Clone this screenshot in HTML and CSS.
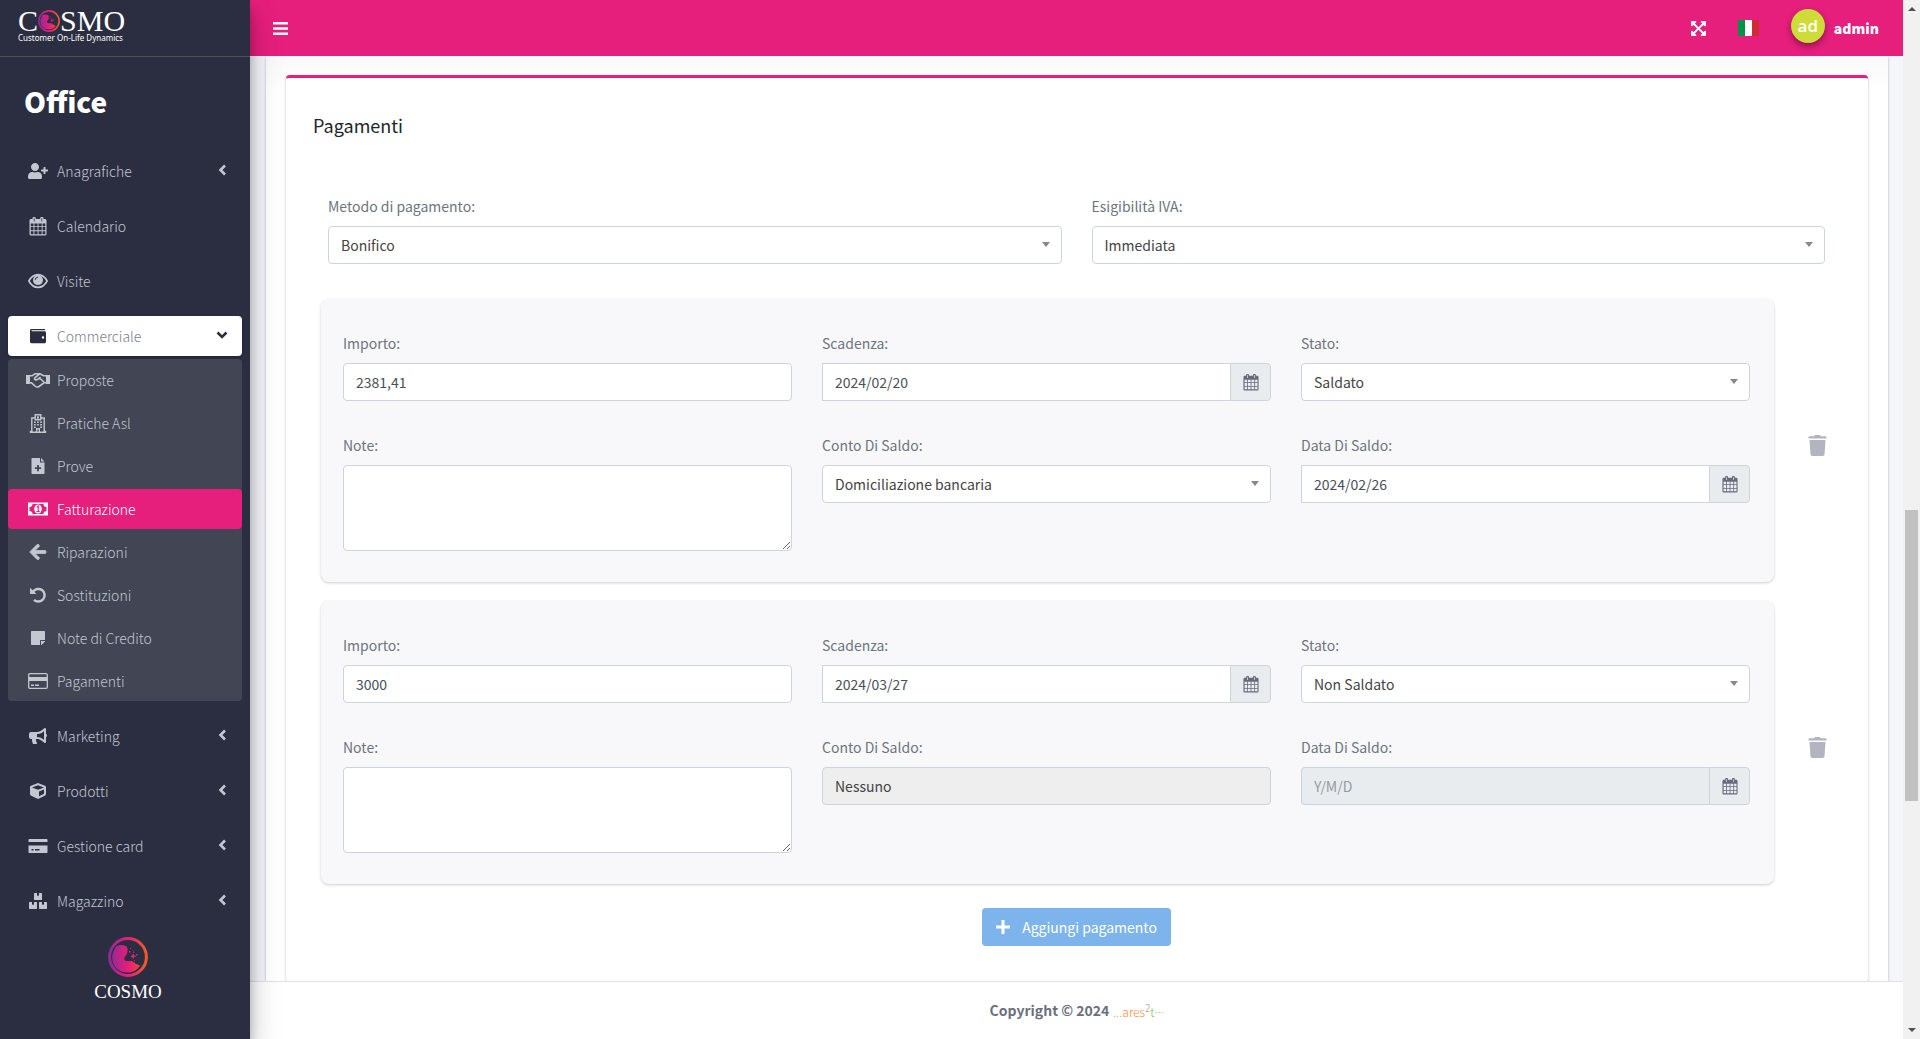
FILE: index.html
```
<!DOCTYPE html>
<html lang="it">
<head>
  <meta charset="UTF-8">
  <meta name="viewport" content="width=device-width, initial-scale=1.0">
  <title>COSMO - Fatturazione</title>
  <link rel="stylesheet" href="styles.css">
</head>
<body>
  <!-- Shared icons -->
  <svg class="sprite" aria-hidden="true">
    <defs>
      <linearGradient id="cosmo-grad" gradientUnits="userSpaceOnUse" x1="2" x2="38" y1="20" y2="20">
        <stop offset="0" stop-color="#8e2a94"/>
        <stop offset="0.5" stop-color="#e61e7c"/>
        <stop offset="1" stop-color="#f15a29"/>
      </linearGradient>
    </defs>
    <symbol id="i-cosmo" viewBox="0 0 40 40">
      <circle cx="20" cy="20" r="18.4" fill="none" stroke="url(#cosmo-grad)" stroke-width="3"/>
      <path fill="url(#cosmo-grad)" d="M9 9c3-1.500 6.500-1 9 .3 1.200.9 1.700 2.500 1.500 4.700-.2 2-.6 3-1.500 4.500-1.600 1.200-2.300 3-1.300 4.800 1.800 1.500 4.500.4 6.500.7 2.300.4 3.400 2 5 3l4 1.500c-3 4.500-7 7-12.500 7C11 35.500 4.200 29.500 4.200 21c0-4.500 1.800-9.500 4.800-12z"/>
      <path fill="#e61e7c" d="M23 18.500h1.500V17h1.500v1.500h1.500V20H26v1.500h-1.500V20H23zM21 14h1.500v1.500H21zM25 14.500h1.200v1.200H25zM28 17h1.500v1.500H28zM22 11h1v1h-1zM26 23h1v1h-1z"/>
    </symbol>
    <symbol id="i-calendar" viewBox="0 0 18 19">
      <path fill="currentColor" fill-rule="evenodd" d="M2 2h1.500V1.300C3.500.5 4.100 0 4.800 0h.7c.7 0 1.300.5 1.300 1.300V2h4.400v-.7c0-.8.6-1.300 1.300-1.300h.7c.7 0 1.300.5 1.300 1.300V2H16c.8 0 1.500.7 1.500 1.500V17c0 .8-.7 1.500-1.500 1.500H2c-.8 0-1.500-.7-1.500-1.500V3.500C.5 2.700 1.200 2 2 2zM4.800 1.300v3.200h.8V1.300zM12.400 1.300v3.200h.8V1.300zM1.800 6.500v2.700h2.700V6.500zM5.400 6.500v2.700h3.200V6.500zM9.500 6.500v2.700h3.200V6.500zM13.600 6.500v2.700h2.700V6.500zM1.800 10.100v3.200h2.700v-3.200zM5.400 10.100v3.200h3.200v-3.200zM9.500 10.100v3.200h3.200v-3.200zM13.600 10.100v3.200h2.700v-3.200zM1.800 14.200v3h2.700v-3zM5.400 14.200v3h3.200v-3zM9.500 14.200v3h3.200v-3zM13.600 14.200v3h2.700v-3z"/>
    </symbol>
    <symbol id="i-left" viewBox="0 0 8 12">
      <path d="M6.500 1.500L2 6l4.500 4.500" fill="none" stroke="currentColor" stroke-width="2.600"/>
    </symbol>
    <symbol id="i-trash" viewBox="0 0 18 21">
      <path fill="currentColor" d="M6.500 0h5l.8 1.200H17c.6 0 1 .3 1 .8v1.500H0V2c0-.5.400-.8 1-.8h4.700zM1 5h16l-1 14.200c-.1 1-.9 1.800-2 1.800H4c-1.100 0-1.900-.8-2-1.800z"/>
    </symbol>
  </svg>

  <div class="layout">
    <!-- Sidebar -->
    <aside class="sidebar">
      <a class="brand" href="#">
        <span class="brand-name">C<svg class="brand-globe"><use href="#i-cosmo"/></svg>SMO</span>
        <span class="brand-tagline">Customer On-Life Dynamics</span>
      </a>
      <h1 class="area-title">Office</h1>
      <nav class="menu">
        <a class="menu-link" href="#">
          <svg class="icon" viewBox="0 0 640 512"><path fill="currentColor" d="M624 208h-64v-64c0-8.800-7.200-16-16-16h-32c-8.800 0-16 7.200-16 16v64h-64c-8.800 0-16 7.200-16 16v32c0 8.800 7.200 16 16 16h64v64c0 8.800 7.200 16 16 16h32c8.800 0 16-7.200 16-16v-64h64c8.800 0 16-7.200 16-16v-32c0-8.800-7.200-16-16-16zm-400 48c70.700 0 128-57.300 128-128S294.700 0 224 0 96 57.300 96 128s57.300 128 128 128zm89.600 32h-16.700c-22.200 10.200-46.900 16-72.900 16s-50.600-5.800-72.900-16h-16.700C60.200 288 0 348.200 0 422.400V464c0 26.500 21.500 48 48 48h352c26.500 0 48-21.500 48-48v-41.600c0-74.200-60.200-134.400-134.400-134.400z"/></svg>
          <span>Anagrafiche</span><svg class="caret"><use href="#i-left"/></svg>
        </a>
        <a class="menu-link" href="#">
          <svg class="icon tall"><use href="#i-calendar"/></svg>
          <span>Calendario</span>
        </a>
        <a class="menu-link" href="#">
          <svg class="icon" viewBox="0 0 18 14"><path d="M1 7c2-3.700 4.900-5.600 8-5.600S15 3.300 17 7c-2 3.700-4.900 5.600-8 5.600S3 10.700 1 7z" fill="none" stroke="currentColor" stroke-width="1.400"/><circle cx="9" cy="6.200" r="4.400" fill="currentColor"/><path d="M6.500 6.200A2.500 2.500 0 0 1 9 3.700" fill="none" stroke="#2b2e41" stroke-width=".8"/></svg>
          <span>Visite</span>
        </a>
        <a class="menu-link open" href="#">
          <svg class="icon" viewBox="0 0 18 16"><path fill="currentColor" fill-rule="evenodd" d="M2.500 1H15c.8 0 1.300.5 1.300 1.200H3c-.8 0-.8 1 0 1H15.500c.9 0 1.500.6 1.500 1.500v9c0 .9-.6 1.500-1.500 1.500h-13C1.600 15.200 1 14.500 1 13.500v-11C1 1.600 1.600 1 2.500 1zM14 8.200a1.200 1.200 0 1 0 .01 2.400 1.200 1.200 0 0 0-.01-2.400z"/></svg>
          <span>Commerciale</span>
          <svg class="caret down" viewBox="0 0 12 8"><path d="M1.500 1.500L6 6l4.500-4.500" fill="none" stroke="currentColor" stroke-width="2.600"/></svg>
        </a>
        <div class="submenu">
          <a class="menu-link" href="#">
            <svg class="icon" viewBox="0 0 24 16"><path fill="currentColor" d="M0 3h4v9H0zM20 3h4v9h-4z"/><path d="M4 3.800h2l3-2h5l3.500 2H20M4 10.800h1.500l4 3.700c1 .8 2 .8 3.500 0l5-3.700H20M13.500 2L9 5.500c-1.500 1.500.8 3.200 2.500 1.900L13.500 6l5 4.500M13.500 6l1-.8" fill="none" stroke="currentColor" stroke-width="1.600"/></svg>
            <span>Proposte</span>
          </a>
          <a class="menu-link" href="#">
            <svg class="icon tall" viewBox="0 0 16 19"><path d="M5.500 4H1.800v13.500H.5v.8h15v-.8h-1.300V4h-3.700" fill="none" stroke="currentColor" stroke-width="1.400"/><path d="M5.200.8h5.600v5H5.200z" fill="none" stroke="currentColor" stroke-width="1.400"/><path fill="currentColor" d="M7 2h.7v1h.7V2H9v3h-.6V4h-.7v1H7zM4 7.500h1.700V9H4zM7.100 7.500h1.700V9H7.100zM10.200 7.500H12V9h-1.800zM4 10h1.700v1.500H4zM7.100 10h1.700v1.500H7.100zM10.200 10H12v1.500h-1.800zM4 12.500h1.700V14H4zM10.200 12.500H12V14h-1.800zM6 14h4v4H8.700v-2.500H7.300V18H6z"/></svg>
            <span>Pratiche Asl</span>
          </a>
          <a class="menu-link" href="#">
            <svg class="icon" viewBox="0 0 13 16"><path fill="currentColor" fill-rule="evenodd" d="M1 0h7.500v4.500H13V15c0 .6-.4 1-1 1H1c-.6 0-1-.4-1-1V1c0-.6.4-1 1-1zM5.600 7v2.200H3.400V11h2.200v2.200h1.800V11h2.200V9.200H7.400V7zM9.500 0L13 3.500H9.500z"/></svg>
            <span>Prove</span>
          </a>
          <a class="menu-link active" href="#">
            <svg class="icon small" viewBox="0 0 20 14"><path fill="currentColor" fill-rule="evenodd" d="M0 .5h20v13H0zM4.500 2A2.800 2.800 0 0 1 1.500 4.800v4.400A2.800 2.800 0 0 1 4.500 12h11a2.800 2.800 0 0 1 3-2.800V4.800a2.800 2.800 0 0 1-3-2.800z"/><ellipse cx="10" cy="7" rx="3.800" ry="4.500" fill="currentColor"/><path d="M8.800 5l1.400-.9v5M8.500 9.500h3.200" fill="none" stroke="#e61e7c" stroke-width="1.100"/></svg>
            <span>Fatturazione</span>
          </a>
          <a class="menu-link" href="#">
            <svg class="icon" viewBox="0 32 448 448"><path fill="currentColor" stroke="currentColor" stroke-width="24" d="M257.500 445.100l-22.200 22.200c-9.400 9.400-24.600 9.400-33.900 0L7 273c-9.400-9.400-9.400-24.600 0-33.900L201.400 44.700c9.400-9.400 24.600-9.400 33.900 0l22.200 22.200c9.500 9.500 9.300 25-.4 34.300L136.600 216H424c13.300 0 24 10.700 24 24v32c0 13.300-10.700 24-24 24H136.600l120.500 114.800c9.800 9.300 10 24.800.4 34.300z"/></svg>
            <span>Riparazioni</span>
          </a>
          <a class="menu-link" href="#">
            <svg class="icon" viewBox="0 0 16 16"><path d="M3 4.800A6.300 6.300 0 1 1 4 12.800" fill="none" stroke="currentColor" stroke-width="2.500"/><path fill="currentColor" d="M0 .8l6.500 6.100H.6c-.4 0-.6-.3-.6-.6z"/></svg>
            <span>Sostituzioni</span>
          </a>
          <a class="menu-link" href="#">
            <svg class="icon small" viewBox="0 32 448 448"><path fill="currentColor" d="M312 320h136V56c0-13.300-10.700-24-24-24H24C10.700 32 0 42.700 0 56v400c0 13.300 10.700 24 24 24h264V344c0-13.200 10.800-24 24-24zm129 55l-98 98c-4.500 4.500-10.600 7-17 7h-6V352h128v6.100c0 6.300-2.500 12.400-7 16.900z"/></svg>
            <span>Note di Credito</span>
          </a>
          <a class="menu-link" href="#">
            <svg class="icon" viewBox="0 0 20 16"><rect x=".7" y=".7" width="18.600" height="14.600" rx="1.200" fill="none" stroke="currentColor" stroke-width="1.300"/><path fill="currentColor" d="M1 4h18v4H1zM3 11.500h3V13H3zM7 11.500h4V13H7z"/></svg>
            <span>Pagamenti</span>
          </a>
        </div>
        <a class="menu-link" href="#">
          <svg class="icon" viewBox="0 0 576 512"><path fill="currentColor" d="M576 240c0-23.600-13-44-32-55.100V32c0-8.700-7-32-32-32-7.100 0-14.200 2.400-20 7l-85 68C364.300 109.200 310.700 128 256 128H64c-35.400 0-64 28.700-64 64v96c0 35.400 28.700 64 64 64h33.700c-1.400 10.500-2.200 21.100-2.200 32 0 39.800 9.300 77.400 25.600 110.900 5.200 10.700 16.500 17.100 28.400 17.100h74.300c26 0 41.700-29.800 25.900-50.600-16.400-21.500-26.200-48.400-26.200-77.400 0-11.100 1.600-21.800 4.400-32H256c54.700 0 108.300 18.800 151 53l85 68c5.700 4.500 12.700 7 20 7 24.900 0 32-22.800 32-32V295.100C563 284 576 263.600 576 240zm-96 141.400L447 355C393 311.800 325.100 288 256 288v-96c69.100 0 137-23.800 191-67l33-26.400z"/></svg>
          <span>Marketing</span><svg class="caret"><use href="#i-left"/></svg>
        </a>
        <a class="menu-link" href="#">
          <svg class="icon" viewBox="0 0 512 512"><path fill="currentColor" d="M239.100 6.300l-208 78c-18.700 7-31.100 25-31.100 45v225.100c0 18.200 10.300 34.800 26.500 42.900l208 104c13.500 6.800 29.400 6.800 42.900 0l208-104c16.300-8.100 26.500-24.800 26.500-42.900V129.300c0-20-12.400-37.900-31.100-44.900l-208-78C262 2.200 250 2.200 239.100 6.300zM256 68.400l192 72v1.100l-192 78-192-78v-1.100l192-72zm32 356V275.500l160-65v133.900l-160 80z"/></svg>
          <span>Prodotti</span><svg class="caret"><use href="#i-left"/></svg>
        </a>
        <a class="menu-link" href="#">
          <svg class="icon small" viewBox="0 0 19 14"><path fill="currentColor" fill-rule="evenodd" d="M1 0h17c.6 0 1 .4 1 1v2H0V1c0-.6.4-1 1-1zM0 6.500h19V13c0 .6-.4 1-1 1H1c-.6 0-1-.4-1-1zM3 10v1.500h2V10zM6.500 10v1.500h4.500V10z"/></svg>
          <span>Gestione card</span><svg class="caret"><use href="#i-left"/></svg>
        </a>
        <a class="menu-link" href="#">
          <svg class="icon" viewBox="0 0 576 512"><path fill="currentColor" d="M560 288h-80v96l-32-21.300-32 21.300v-96h-80c-8.800 0-16 7.200-16 16v192c0 8.800 7.200 16 16 16h224c8.800 0 16-7.200 16-16V304c0-8.800-7.200-16-16-16zm-384-64h224c8.800 0 16-7.200 16-16V16c0-8.800-7.200-16-16-16h-80v96l-32-21.300L256 96V0h-80c-8.800 0-16 7.200-16 16v192c0 8.800 7.200 16 16 16zm64 64h-80v96l-32-21.300L96 384v-96H16c-8.800 0-16 7.200-16 16v192c0 8.800 7.200 16 16 16h224c8.800 0 16-7.200 16-16V304c0-8.800-7.200-16-16-16z"/></svg>
          <span>Magazzino</span><svg class="caret"><use href="#i-left"/></svg>
        </a>
      </nav>
      <div class="sidebar-logo">
        <svg class="globe"><use href="#i-cosmo"/></svg>
        <span>COSMO</span>
      </div>
    </aside>

    <div class="page">
      <!-- Top bar -->
      <header class="topbar">
        <button class="top-button" type="button" aria-label="Menu">
          <svg width="15" height="13" viewBox="0 0 15 13"><path fill="currentColor" d="M0 0h15v2.600H0zM0 5.200h15v2.600H0zM0 10.400h15V13H0z"/></svg>
        </button>
        <div class="top-tools">
          <button class="top-button" type="button" aria-label="Schermo intero">
            <svg width="15" height="15" viewBox="0 32 448 448"><path fill="currentColor" d="M448 344v112a24 24 0 0 1-24 24H312c-21.400 0-32.100-25.900-17-41l36.200-36.200L224 295.600 116.800 402.900 153 439c15.100 15.100 4.400 41-17 41H24a24 24 0 0 1-24-24V344c0-21.400 25.900-32.100 41-17l36.200 36.200L184.500 256 77.200 148.700 41 185c-15.100 15.100-41 4.400-41-17V56a24 24 0 0 1 24-24h112c21.400 0 32.100 25.900 17 41l-36.200 36.200L224 216.400l107.200-107.300L295 73c-15.100-15.100-4.400-41 17-41h112a24 24 0 0 1 24 24v112c0 21.400-25.900 32.100-41 17l-36.200-36.200L263.500 256l107.300 107.300L407 327.100c15.100-15.200 41-4.500 41 16.900z"/></svg>
          </button>
          <button class="top-button" type="button" aria-label="Italiano">
            <svg width="21" height="16" viewBox="0 0 21 16"><path fill="#009246" d="M0 0h7v16H0z"/><path fill="#fff" d="M7 0h7v16H7z"/><path fill="#ce2b37" d="M14 0h7v16h-7z"/></svg>
          </button>
          <a class="user" href="#"><span class="avatar">ad</span><span>admin</span></a>
        </div>
      </header>

      <main class="content">
        <div class="panel">
          <section class="card">
            <h2 class="card-title">Pagamenti</h2>

            <div class="method-row">
              <div class="field">
                <label for="metodo">Metodo di pagamento:</label>
                <div class="select-box"><select id="metodo" class="control"><option>Bonifico</option></select></div>
              </div>
              <div class="field">
                <label for="iva">Esigibilità IVA:</label>
                <div class="select-box"><select id="iva" class="control"><option>Immediata</option></select></div>
              </div>
            </div>

            <!-- Payment 1 -->
            <div class="payment-row">
              <div class="payment">
                <div class="field">
                  <label for="importo1">Importo:</label>
                  <input id="importo1" class="control" type="text" value="2381,41">
                </div>
                <div class="field">
                  <label for="scadenza1">Scadenza:</label>
                  <div class="date-box">
                    <input id="scadenza1" class="control" type="text" value="2024/02/20" placeholder="Y/M/D">
                    <button type="button" class="date-button" aria-label="Apri calendario"><svg><use href="#i-calendar"/></svg></button>
                  </div>
                </div>
                <div class="field">
                  <label for="stato1">Stato:</label>
                  <div class="select-box"><select id="stato1" class="control"><option>Saldato</option></select></div>
                </div>
                <div class="field">
                  <label for="note1">Note:</label>
                  <textarea id="note1" class="control"></textarea>
                </div>
                <div class="field">
                  <label for="conto1">Conto Di Saldo:</label>
                  <div class="select-box"><select id="conto1" class="control"><option>Domiciliazione bancaria</option></select></div>
                </div>
                <div class="field">
                  <label for="saldo1">Data Di Saldo:</label>
                  <div class="date-box">
                    <input id="saldo1" class="control" type="text" value="2024/02/26" placeholder="Y/M/D">
                    <button type="button" class="date-button" aria-label="Apri calendario"><svg><use href="#i-calendar"/></svg></button>
                  </div>
                </div>
              </div>
              <button type="button" class="delete-button" aria-label="Elimina pagamento"><svg><use href="#i-trash"/></svg></button>
            </div>

            <!-- Payment 2 -->
            <div class="payment-row">
              <div class="payment">
                <div class="field">
                  <label for="importo2">Importo:</label>
                  <input id="importo2" class="control" type="text" value="3000">
                </div>
                <div class="field">
                  <label for="scadenza2">Scadenza:</label>
                  <div class="date-box">
                    <input id="scadenza2" class="control" type="text" value="2024/03/27" placeholder="Y/M/D">
                    <button type="button" class="date-button" aria-label="Apri calendario"><svg><use href="#i-calendar"/></svg></button>
                  </div>
                </div>
                <div class="field">
                  <label for="stato2">Stato:</label>
                  <div class="select-box"><select id="stato2" class="control"><option>Non Saldato</option></select></div>
                </div>
                <div class="field">
                  <label for="note2">Note:</label>
                  <textarea id="note2" class="control"></textarea>
                </div>
                <div class="field">
                  <label for="conto2">Conto Di Saldo:</label>
                  <select id="conto2" class="control" disabled><option>Nessuno</option></select>
                </div>
                <div class="field">
                  <label for="saldo2">Data Di Saldo:</label>
                  <div class="date-box disabled">
                    <input id="saldo2" class="control" type="text" placeholder="Y/M/D" disabled>
                    <button type="button" class="date-button" aria-label="Apri calendario"><svg><use href="#i-calendar"/></svg></button>
                  </div>
                </div>
              </div>
              <button type="button" class="delete-button" aria-label="Elimina pagamento"><svg><use href="#i-trash"/></svg></button>
            </div>

            <button type="button" class="add-button">
              <svg width="14" height="14" viewBox="0 0 14 14"><path fill="currentColor" d="M5.500 0h3v5.500H14v3H8.500V14h-3V8.500H0v-3h5.500z"/></svg>
              Aggiungi pagamento
            </button>
          </section>
        </div>
      </main>

      <footer class="footer">
        <strong>Copyright © 2024</strong>
        <a class="ares" href="#"><span>...ares</span><sup>2</sup><span class="green">t<span class="dots">···</span></span></a>
      </footer>
    </div>

    <!-- Page scroll track -->
    <div class="scroll-track" aria-hidden="true">
      <span class="scroll-arrow up"></span>
      <span class="scroll-thumb"></span>
      <span class="scroll-arrow down"></span>
    </div>
  </div>
</body>
</html>
```
FILE: styles.css
```
* {
  box-sizing: border-box;
  margin: 0;
  padding: 0;
}

body {
  font-family: "Noto Sans CJK SC", "Noto Sans", sans-serif;
  font-size: 14px;
  line-height: 24px;
  color: #212529;
  background-color: #f4f6f9;
}

a {
  color: inherit;
  text-decoration: none;
}

button,
input,
select,
textarea {
  font: inherit;
  color: inherit;
}

button {
  border: none;
  background: none;
  cursor: pointer;
}

.sprite {
  position: absolute;
  width: 0;
  height: 0;
}

.layout {
  display: flex;
  height: 100vh;
  overflow: hidden;
}

/* Sidebar */
.sidebar {
  flex: 0 0 250px;
  z-index: 2;
  background-color: #2b2e41;
  color: #c2c7d0;
  box-shadow: 0 14px 28px rgba(0, 0, 0, 0.25), 0 10px 10px rgba(0, 0, 0, 0.22);
}

.brand {
  display: flex;
  flex-direction: column;
  height: 57px;
  padding: 7px 18px 0;
  border-bottom: 1px solid #4b545c;
  color: #fff;
}

.brand-name {
  display: flex;
  align-items: center;
  font-family: "Liberation Serif", serif;
  font-size: 30px;
  line-height: 27px;
}

.brand-globe {
  width: 22px;
  height: 22px;
}

.brand-tagline {
  font-family: "Noto Sans", sans-serif;
  font-size: 8px;
  line-height: 8px;
}

.area-title {
  padding: 20px 24px 2px;
  font-size: 28px;
  line-height: 48px;
  font-weight: 900;
  color: #fff;
}

.menu {
  display: flex;
  flex-direction: column;
  gap: 15px;
  padding: 24px 8px 0;
  font-weight: 300;
}

.menu-link {
  display: flex;
  align-items: center;
  gap: 6px;
  height: 40px;
  padding: 0 14px 0 17px;
  border-radius: 4px;
}

.icon {
  width: 26px;
  height: 16px;
}

.icon.small {
  height: 14px;
}

.icon.tall {
  height: 19px;
}

.caret {
  width: 9px;
  height: 12px;
  margin: 0 1px 2px auto;
}

.caret.down {
  width: 12px;
  height: 8px;
  margin-right: 0;
}

.menu-link.open {
  background-color: #fff;
  color: #2b2e41;
  box-shadow: 0 1px 3px rgba(0, 0, 0, 0.24);
}

.menu-link.open span {
  color: #7b7e8b;
}

.submenu {
  display: flex;
  flex-direction: column;
  gap: 3px;
  margin-top: -12px;
  padding-top: 1px;
  border-radius: 4px;
  background-color: #414554;
}

.menu-link.active {
  background-color: #e61e7c;
  color: #fff;
}

.sidebar-logo {
  display: flex;
  flex-direction: column;
  align-items: center;
  gap: 1px;
  padding: 16px 0 0 6px;
  font-family: "Liberation Serif", serif;
  font-size: 19px;
  line-height: 28px;
  color: #fff;
}

.globe {
  width: 40px;
  height: 40px;
}

/* Top bar */
.page {
  flex: 1;
  min-width: 0;
  display: flex;
  flex-direction: column;
}

.topbar {
  display: flex;
  justify-content: space-between;
  align-items: center;
  height: 56px;
  padding: 0 24px 0 23px;
  background-color: #e61e7c;
  color: #fff;
}

.top-button {
  display: flex;
  color: #fff;
}

.top-tools {
  display: flex;
  align-items: center;
  gap: 32px;
}

.user {
  display: flex;
  align-items: center;
  gap: 9px;
  font-weight: 900;
}

.avatar {
  width: 34px;
  height: 34px;
  margin-bottom: 4px;
  border-radius: 50%;
  background-color: #cddc39;
  font: 600 17px/34px "Open Sans", sans-serif;
  text-align: center;
  box-shadow: 0 3px 6px rgba(0, 0, 0, 0.4);
}

/* Content */
.content {
  flex: 1;
  min-height: 0;
  padding: 0 15px 0 16px;
  overflow: hidden;
}

.panel {
  padding: 19px 20px 0;
  background: linear-gradient(#f9f9f9, #fff 36px);
  box-shadow: 0 0 1px rgba(0, 0, 0, 0.125), 0 1px 3px rgba(0, 0, 0, 0.2);
}

.card {
  display: flex;
  flex-direction: column;
  padding: 33px 28px 36px 27px;
  border-top: 3px solid #e61e7c;
  border-radius: 4px;
  background-color: #fff;
  box-shadow: 0 0 1px rgba(0, 0, 0, 0.125), 0 1px 3px rgba(0, 0, 0, 0.2);
}

.card-title {
  font-size: 18px;
  line-height: 28px;
  font-weight: 400;
}

.method-row {
  display: grid;
  grid-template-columns: 1fr 1fr;
  gap: 30px;
  margin: 55px 15px 35px;
}

.field {
  display: flex;
  flex-direction: column;
  gap: 8px;
}

.field label {
  color: #6c757d;
}

.control {
  width: 100%;
  height: 38px;
  padding: 0 12px;
  border: 1px solid #ced4da;
  border-radius: 4px;
  background-color: #fff;
  color: #495057;
  appearance: none;
}

select.control {
  color: #444;
  opacity: 1;
}

textarea.control {
  height: 86px;
  padding: 6px 12px;
  resize: vertical;
}

.control::placeholder {
  color: #939ba2;
}

select.control:disabled {
  background-color: #eee;
}

.date-box.disabled .control {
  border-radius: 4px 0 0 4px;
  background-color: #e9ecef;
}

.select-box {
  position: relative;
}

.select-box::after {
  content: "";
  position: absolute;
  top: 16px;
  right: 12px;
  border: 4px solid transparent;
  border-top: 5px solid #888;
  border-bottom: none;
  pointer-events: none;
}

.date-box {
  display: flex;
}

.date-box .control {
  border-right: none;
  border-radius: 0;
}

.date-button {
  display: flex;
  flex: 0 0 41px;
  align-items: center;
  justify-content: center;
  border: 1px solid #ced4da;
  border-radius: 0 4px 4px 0;
  background-color: #e9ecef;
  color: #686b7c;
}

.date-button svg {
  width: 16px;
  height: 17px;
}

.payment-row {
  display: flex;
  gap: 34px;
  margin: 0 13px 19px 8px;
}

.payment {
  flex: 1;
  display: grid;
  grid-template-columns: repeat(3, 1fr);
  gap: 32px 30px;
  padding: 32px 24px 31px 22px;
  border-radius: 8px;
  background-color: #f8f8fa;
  box-shadow: 0 1px 3px rgba(0, 0, 0, 0.2);
}

.delete-button {
  width: 19px;
  padding-top: 16px;
  color: #b2b5bf;
}

.delete-button svg {
  width: 19px;
  height: 21px;
}

.add-button {
  display: flex;
  align-items: center;
  align-self: center;
  gap: 12px;
  height: 38px;
  margin-top: 5px;
  padding: 0 14px;
  border-radius: 4px;
  background-color: #7db4ec;
  color: #fff;
}

/* Footer */
.footer {
  display: flex;
  justify-content: center;
  gap: 4px;
  padding: 16px;
  border-top: 1px solid #dee2e6;
  background-color: #fff;
  color: #6c6f7d;
}

.ares {
  padding-top: 4px;
  font-size: 12px;
  line-height: 20px;
  font-weight: 300;
  color: #f08c3a;
}

.ares sup {
  font-size: 10px;
  line-height: 10px;
  color: #999;
}

.ares .green {
  color: #8bb84a;
}

.ares .dots {
  font-family: "Noto Sans", sans-serif;
}

/* Scroll track */
.scroll-track {
  flex: 0 0 17px;
  display: flex;
  flex-direction: column;
  align-items: center;
  padding: 7px 0;
  background-color: #f1f1f1;
}

.scroll-arrow {
  border: 4px solid transparent;
}

.scroll-arrow.up {
  border-top: none;
  border-bottom-color: #505050;
}

.scroll-arrow.down {
  margin-top: auto;
  border-bottom: none;
  border-top-color: #505050;
}

.scroll-thumb {
  width: 13px;
  height: 28vh;
  margin-top: 48vh;
  background-color: #c1c1c1;
}
```
